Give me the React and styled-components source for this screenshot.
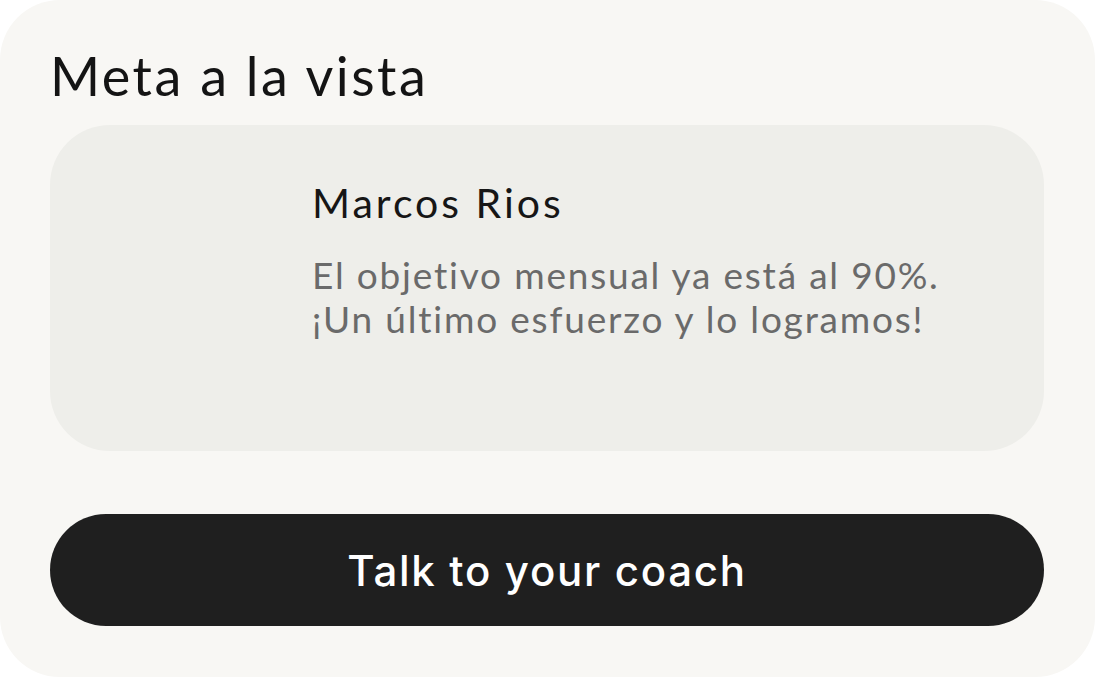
import React from "react";
import styled, { createGlobalStyle } from "styled-components";

const Global = createGlobalStyle`
  html, body { margin: 0; padding: 0; background: #ffffff; }
  * { box-sizing: border-box; }
`;

const Panel = styled.section`
  width: 1095px;
  height: 677px;
  background: #f8f7f4;
  border-radius: 60px;
  padding: 44px 51px 51px 50px;
  display: flex;
  flex-direction: column;
  font-family: "Lato", "Open Sans", sans-serif;
`;

const Title = styled.h1`
  margin: 0;
  font-weight: 400;
  font-size: 54px;
  line-height: 64px;
  color: #141414;
  letter-spacing: 2.5px;
`;

const Card = styled.div`
  margin-top: 17px;
  height: 326px;
  background: #eeeeea;
  border-radius: 60px;
  padding: 54px 40px 0 262px;
  display: flex;
  flex-direction: column;
`;

const Name = styled.h2`
  margin: 0;
  font-weight: 400;
  font-size: 41px;
  line-height: 48px;
  color: #161616;
  letter-spacing: 3px;
`;

const Message = styled.p`
  margin: 26px 0 0;
  font-size: 37px;
  line-height: 44px;
  color: #6a6a6a;
  font-weight: 400;
  letter-spacing: 1.8px;
`;

const Button = styled.button`
  margin-top: 63px;
  height: 112px;
  width: 100%;
  border: none;
  border-radius: 56px;
  background: #1f1f1f;
  color: #ffffff;
  font-family: "Inter", "Lato", sans-serif;
  font-weight: 500;
  font-size: 42px;
  letter-spacing: 1.7px;
  cursor: pointer;
`;

export default function App() {
  return (
    <>
      <Global />
      <Panel>
        <Title>Meta a la vista</Title>
        <Card>
          <Name>Marcos Rios</Name>
          <Message>
            El objetivo mensual ya está al 90%.
            <br />
            ¡Un último esfuerzo y lo logramos!
          </Message>
        </Card>
        <Button>Talk to your coach</Button>
      </Panel>
    </>
  );
}
